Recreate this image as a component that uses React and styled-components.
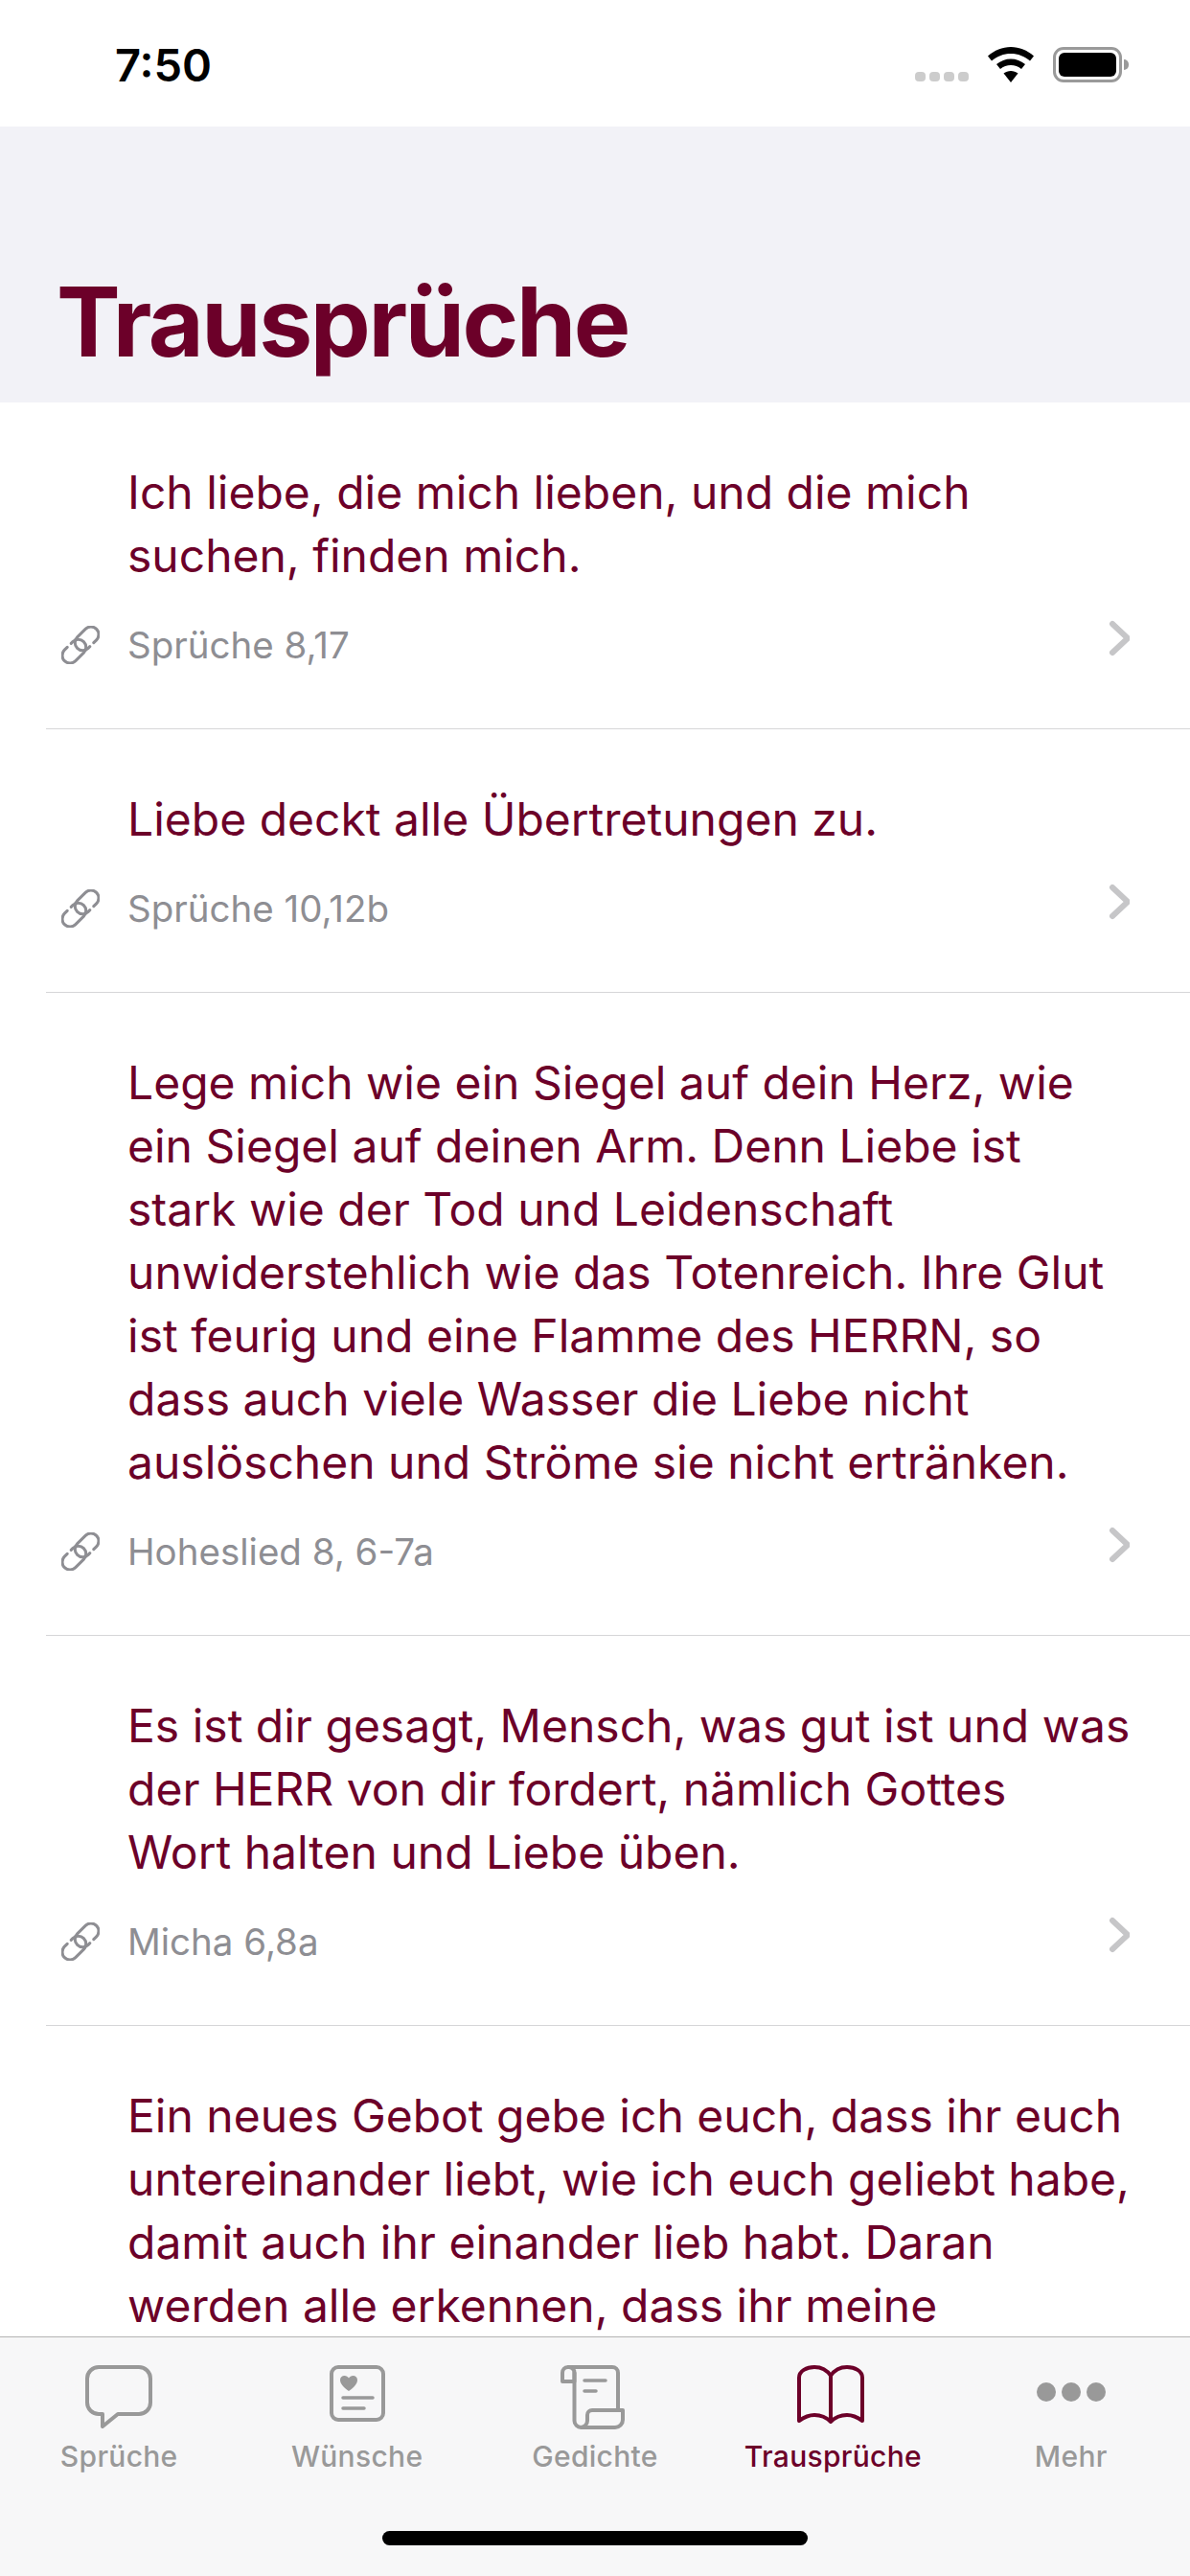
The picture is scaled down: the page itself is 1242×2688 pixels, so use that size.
import React from "react";
import styled, { createGlobalStyle } from "styled-components";

const verses = [
  {
    text: "Ich liebe, die mich lieben, und die mich\nsuchen, finden mich.",
    ref: "Sprüche 8,17",
  },
  { text: "Liebe deckt alle Übertretungen zu.", ref: "Sprüche 10,12b" },
  {
    text: "Lege mich wie ein Siegel auf dein Herz, wie\nein Siegel auf deinen Arm. Denn Liebe ist\nstark wie der Tod und Leidenschaft\nunwiderstehlich wie das Totenreich. Ihre Glut\nist feurig und eine Flamme des HERRN, so\ndass auch viele Wasser die Liebe nicht\nauslöschen und Ströme sie nicht ertränken.",
    ref: "Hoheslied 8, 6-7a",
  },
  {
    text: "Es ist dir gesagt, Mensch, was gut ist und was\nder HERR von dir fordert, nämlich Gottes\nWort halten und Liebe üben.",
    ref: "Micha 6,8a",
  },
  {
    text: "Ein neues Gebot gebe ich euch, dass ihr euch\nuntereinander liebt, wie ich euch geliebt habe,\ndamit auch ihr einander lieb habt. Daran\nwerden alle erkennen, dass ihr meine",
  },
];

const BubbleIcon = () => (
  <svg width="70" height="66" viewBox="0 0 70 66" fill="none" stroke="currentColor" strokeWidth="4" strokeLinejoin="round">
    <path d="M14 2h42a12 12 0 0 1 12 12v25a12 12 0 0 1-12 12H34L18 64V51h-4A12 12 0 0 1 2 39V14A12 12 0 0 1 14 2z" />
  </svg>
);

const WishIcon = () => (
  <svg width="58" height="60" viewBox="0 0 58 60" fill="none" stroke="currentColor" strokeWidth="4" strokeLinecap="round">
    <rect x="2" y="2" width="54" height="55" rx="7" />
    <path
      d="M20 27C14 23 11 19 11 15.500 11 12.500 13 11 15.500 11 17.500 11 19 12 20 13.500 21 12 22.500 11 24.500 11 27 11 29 12.500 29 15.500 29 19 26 23 20 27z"
      fill="currentColor"
      stroke="none"
    />
    <path d="M14 34H45M14 45H36" strokeWidth="3.5" />
  </svg>
);

const ScrollIcon = () => (
  <svg width="72" height="68" viewBox="0 0 72 68" fill="none" stroke="currentColor" strokeWidth="4" strokeLinecap="round" strokeLinejoin="round">
    <path d="M8 2H54a6 6 0 0 1 6 6V47" />
    <path d="M14.500 8V58a7 7 0 0 0 7 7H57a8 8 0 0 0 8-8V47H33a5 5 0 0 0-5 5V58a7 7 0 0 1-7 7" />
    <path d="M8 2a6 6 0 0 0-6 6V17H14.500V8a6 6 0 0 0-6.500-6" />
    <path d="M25 16H47M25 27H37" strokeWidth="3.5" />
  </svg>
);

const BookIcon = () => (
  <svg width="72" height="62" viewBox="0 0 72 62" fill="none" stroke="currentColor" strokeWidth="4" strokeLinecap="round" strokeLinejoin="round">
    <path d="M1 58V13C1 6 9 2 17 2 24 2 30 5 34 11 38 5 44 2 51 2 59 2 67 6 67 13V58C60 53 56 52 51 52 44 52 38 55 34 59 30 55 24 52 17 52 12 52 8 53 1 58zM34 11V59" />
  </svg>
);

const DotsIcon = () => (
  <svg width="72" height="40" viewBox="0 0 72 40" fill="currentColor">
    <circle cx="10" cy="28" r="10" />
    <circle cx="36" cy="28" r="10" />
    <circle cx="62" cy="28" r="10" />
  </svg>
);

const LinkIcon = () => (
  <svg width="40" height="40" viewBox="0 0 42 42" fill="none" stroke="currentColor" strokeWidth="3.2" strokeLinecap="round">
    <g transform="rotate(-45 21 21)">
      <path d="M9 12.500H4.800a8.500 8.500 0 0 0 0 17H17.500a8.500 8.500 0 0 0 0-17H15" />
      <path d="M33 29.500H37.200a8.500 8.500 0 0 0 0-17H24.500a8.500 8.500 0 0 0 0 17H27" />
    </g>
  </svg>
);

const Chevron = () => (
  <svg width="24" height="38" viewBox="0 0 24 38" fill="none" stroke="#c6c6c8" strokeWidth="6" strokeLinecap="round" strokeLinejoin="round">
    <path d="M6 4l16 15L6 34" />
  </svg>
);

const tabs = [
  { label: "Sprüche", icon: <BubbleIcon /> },
  { label: "Wünsche", icon: <WishIcon /> },
  { label: "Gedichte", icon: <ScrollIcon /> },
  { label: "Trausprüche", icon: <BookIcon />, active: true },
  { label: "Mehr", icon: <DotsIcon /> },
];

export default function App() {
  return (
    <>
      <GlobalStyle />
      <Page>
        <StatusBar>
          <Time>7:50</Time>
          <StatusIcons>
            <SignalDots>
              <Dot />
              <Dot />
              <Dot />
              <Dot />
            </SignalDots>
            <svg width="48" height="37" viewBox="0 0 48 37" fill="#000">
              <path d="M24 0c9 0 17 3.500 24 9.500l-4 5C38 9.500 31.500 7 24 7S10 9.500 4 14.500l-4-5C7 3.500 15 0 24 0z" />
              <path d="M24 12.500c5.500 0 10.500 2 15 5.500l-4 5c-3-2.500-7-4-11-4s-8 1.500-11 4l-4-5c4.500-3.500 9.500-5.500 15-5.500z" />
              <path d="M24 25c2.800 0 5.200 1 7.500 2.500L24 37l-7.500-9.500C18.800 26 21.200 25 24 25z" />
            </svg>
            <Battery>
              <BatteryFill />
            </Battery>
          </StatusIcons>
        </StatusBar>
        <Header>
          <Title>Trausprüche</Title>
        </Header>
        <List>
          {verses.map((item) => (
            <Row key={item.text}>
              <Verse>{item.text}</Verse>
              {item.ref && (
                <Reference>
                  <LinkSlot>
                    <LinkIcon />
                  </LinkSlot>
                  <RefText>{item.ref}</RefText>
                  <ChevronSlot>
                    <Chevron />
                  </ChevronSlot>
                </Reference>
              )}
            </Row>
          ))}
        </List>
        <TabBar>
          <Tabs>
            {tabs.map((tab) => (
              <Tab key={tab.label} $active={tab.active}>
                <TabIcon>{tab.icon}</TabIcon>
                <TabLabel>{tab.label}</TabLabel>
              </Tab>
            ))}
          </Tabs>
          <HomeIndicator />
        </TabBar>
      </Page>
    </>
  );
}

const GlobalStyle = createGlobalStyle`
  html, body {
    margin: 0;
    padding: 0;
    background: #fff;
  }
  body {
    font-family: Inter, "Liberation Sans", sans-serif;
  }
`;

const Page = styled.div`
  width: 1242px;
  height: 2688px;
  display: flex;
  flex-direction: column;
  overflow: hidden;
  background: #fff;
`;

const StatusBar = styled.div`
  height: 132px;
  flex-shrink: 0;
  display: flex;
  justify-content: space-between;
  padding: 44px 71px 0 120px;
  box-sizing: border-box;
`;

const Time = styled.div`
  font-size: 47px;
  font-weight: 600;
  line-height: 48px;
  color: #000;
`;

const StatusIcons = styled.div`
  display: flex;
  align-items: flex-start;
  padding-top: 5px;
  gap: 20px;
`;

const SignalDots = styled.div`
  display: flex;
  gap: 4px;
  margin-top: 26px;
`;

const Dot = styled.div`
  width: 11px;
  height: 10px;
  border-radius: 4px;
  background: #cccccc;
`;

const Battery = styled.div`
  position: relative;
  width: 72px;
  height: 37px;
  box-sizing: border-box;
  border: 3px solid #9a9a9a;
  border-radius: 11px;
  padding: 3px;
  &::after {
    content: "";
    position: absolute;
    right: -10px;
    top: 10px;
    width: 5px;
    height: 11px;
    background: #9a9a9a;
    border-radius: 0 5px 5px 0;
  }
`;

const BatteryFill = styled.div`
  width: 100%;
  height: 100%;
  background: #000;
  border-radius: 6px;
`;

const Header = styled.div`
  height: 288px;
  flex-shrink: 0;
  display: flex;
  align-items: flex-end;
  padding: 0 0 24px 59px;
  box-sizing: border-box;
  background: #f2f2f7;
`;

const Title = styled.h1`
  margin: 0;
  font-size: 100px;
  font-weight: 700;
  line-height: 120px;
  letter-spacing: -2.4px;
  color: #6c0029;
`;

const List = styled.div`
  flex: 1;
  min-height: 0;
  overflow: hidden;
`;

const Row = styled.div`
  margin-left: 48px;
  padding: 61px 0 65px 85px;
  border-bottom: 1px solid #d6d6d8;
`;

const Verse = styled.div`
  font-size: 48px;
  line-height: 66px;
  color: #6c0029;
  white-space: pre-line;
`;

const Reference = styled.div`
  display: flex;
  align-items: center;
  margin: 38px 0 0 -85px;
  height: 44px;
`;

const LinkSlot = styled.div`
  width: 85px;
  padding-left: 16px;
  box-sizing: border-box;
  display: flex;
  color: #8e8e93;
`;

const RefText = styled.div`
  flex: 1;
  font-size: 38.5px;
  color: #8e8e93;
`;

const ChevronSlot = styled.div`
  width: 87px;
  display: flex;
  margin-top: -14px;
`;

const TabBar = styled.div`
  height: 250px;
  flex-shrink: 0;
  box-sizing: border-box;
  background: #f7f7f8;
  border-top: 1px solid #b3b3b3;
  display: flex;
  flex-direction: column;
  align-items: center;
`;

const Tabs = styled.div`
  width: 100%;
  display: grid;
  grid-template-columns: repeat(5, 1fr);
  padding-top: 29px;
`;

const Tab = styled.div`
  display: flex;
  flex-direction: column;
  align-items: center;
  color: ${(p) => (p.$active ? "#6c0029" : "#999999")};
`;

const TabIcon = styled.div`
  height: 70px;
  display: flex;
  align-items: flex-start;
  justify-content: center;
  svg {
    overflow: visible;
  }
`;

const TabLabel = styled.div`
  margin-top: 7px;
  font-size: 30px;
  line-height: 36px;
  font-weight: 500;
  letter-spacing: 0.3px;
`;

const HomeIndicator = styled.div`
  width: 444px;
  height: 15px;
  margin-top: 60px;
  border-radius: 8px;
  background: #000;
`;
